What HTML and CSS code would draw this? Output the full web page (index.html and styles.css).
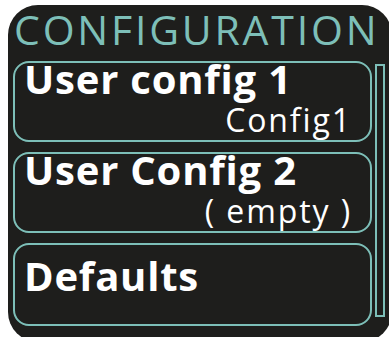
FILE: index.html
```html
<!DOCTYPE html>
<html lang="en">
<head>
  <meta charset="UTF-8">
  <meta name="viewport" content="width=device-width, initial-scale=1.0">
  <title>Configuration</title>
  <link rel="stylesheet" href="styles.css">
</head>
<body>
  <div class="panel">
    <h1 class="title">CONFIGURATION</h1>
    <div class="content">
      <ul class="config-list">
        <li class="config-item">
          <span class="config-name">User config 1</span>
          <span class="config-value">Config1</span>
        </li>
        <li class="config-item">
          <span class="config-name">User Config 2</span>
          <span class="config-value">( empty )</span>
        </li>
        <li class="config-item config-item-single">
          <span class="config-name">Defaults</span>
        </li>
      </ul>
      <div class="scrollbar"></div>
    </div>
  </div>
</body>
</html>
```

FILE: styles.css
```css
body {
  margin: 0;
  background-color: #fff;
  font-family: "Open Sans", sans-serif;
  overflow: hidden;
}
.panel {
  margin: 5px 0 0 8px;
  width: 384px;
  height: 337px;
  background-color: #1e1e1c;
  border-radius: 30px;
  box-sizing: border-box;
  padding: 2px 0 0 5px;
}
.title {
  margin: 0;
  color: #7dbfb8;
  font-size: 41px;
  font-weight: 400;
  line-height: 44px;
  letter-spacing: 2.8px;
  padding-left: 1px;
  height: 54px;
}
.content {
  display: flex;
  gap: 3px;
}
.config-list {
  list-style-type: none;
  margin: 0;
  padding: 0;
  width: 359px;
  display: flex;
  flex-direction: column;
  gap: 10px;
}
.config-item {
  height: 81px;
  box-sizing: border-box;
  border: 2.5px solid #7dbfb8;
  border-radius: 16px;
  padding: 0 18px 0 9px;
  display: flex;
  flex-direction: column;
}
.config-item-single {
  height: 83px;
  padding-top: 15px;
}
.config-name {
  color: #fff;
  font-size: 40px;
  font-weight: 700;
  line-height: 32px;
  letter-spacing: 0.8px;
}
.config-value {
  color: #fff;
  font-size: 32px;
  line-height: 34px;
  margin-top: 8px;
  text-align: right;
  letter-spacing: 1.9px;
}
.scrollbar {
  margin-top: 3px;
  width: 10px;
  height: 253px;
  box-sizing: border-box;
  border: 2px solid #7dbfb8;
}
```
